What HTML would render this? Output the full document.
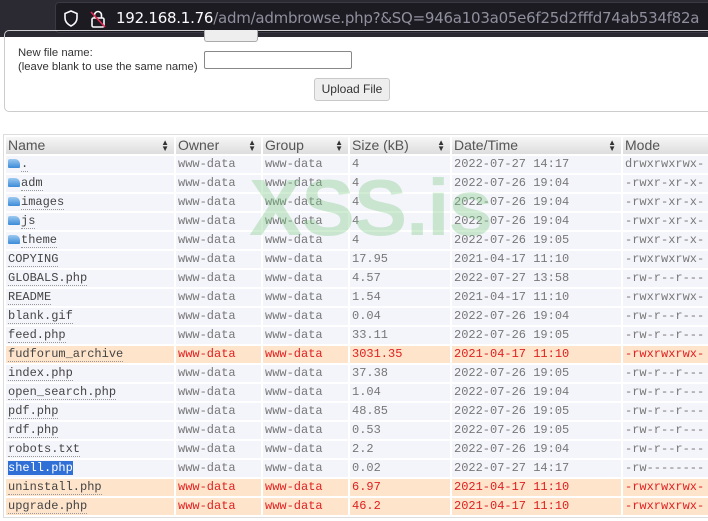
<!DOCTYPE html>
<html><head><meta charset="utf-8"><style>
*{margin:0;padding:0;box-sizing:border-box}
body{width:708px;height:521px;overflow:hidden;background:#fff;font-family:"Liberation Sans",sans-serif;position:relative}
.bar{position:absolute;left:0;top:0;width:708px;height:37px;background:#2b2a33}
.url{position:absolute;left:55px;top:2px;width:660px;height:31px;background:#1c1b22;border-radius:4px;border:1px solid #3a3944}
.url span{position:absolute;left:60px;top:6px;font-size:15px;color:#8f8f9d;white-space:nowrap;font-family:"DejaVu Sans",sans-serif;letter-spacing:-0.25px}
.url b{font-weight:normal;color:#fbfbfe}
.box{position:absolute;left:4px;top:30px;width:720px;height:82px;border:1px solid #ccc;border-radius:5px}
.lbl{position:absolute;left:18px;top:46px;font-size:11.3px;color:#333;line-height:14px}
.inp{position:absolute;left:204px;top:51px;width:148px;height:18px;border:1px solid #888;border-radius:2px}
.btn{position:absolute;left:314px;top:78px;width:76px;height:23px;border:1px solid #c8c8c8;border-radius:3px;background:#eee;font-size:12px;color:#333;text-align:center;line-height:21px}
.btn0{position:absolute;left:204px;top:30px;width:54px;height:12px;border:1px solid #aaa;border-top:none;border-radius:0 0 3px 3px;background:#eee}
table{position:absolute;left:3px;top:134px;border-collapse:separate;border-spacing:2px;border:1px solid #ddd;width:710px}
th{background:linear-gradient(#f6f6f6,#ddd);height:17px;font-weight:normal;font-size:14px;color:#555;text-align:left;padding:0 2px;position:relative;line-height:15px}
th i{position:absolute;right:5px;top:3px;font-style:normal;font-size:8px;color:#333;line-height:6px}
td{background:#f4f5fb;height:17px;font-family:"Liberation Mono",monospace;font-size:12px;color:#777;padding:0 2px;white-space:nowrap;line-height:15px}
td:first-child{color:#444}
td:first-child span{border-bottom:1px dotted #999}
tr.o td{background:#fde4cb;color:#e02020}
tr.o td:first-child{color:#444}
.sel{background:#2f6fd6;color:#fff!important;border:none!important}
.f{display:inline-block;width:12px;height:9px;background:linear-gradient(#9cc9f0,#3b8ad8);border-radius:2px 5px 1px 1px;margin-right:1px;vertical-align:-1px}
.wm{position:absolute;left:249px;top:162px;font-size:80px;font-weight:bold;color:rgba(120,200,130,.35);letter-spacing:-1px;pointer-events:none;font-family:"Liberation Sans",sans-serif}
</style></head><body>
<div class="bar"><div class="url">
<svg style="position:absolute;left:7px;top:7px" width="16" height="17" viewBox="0 0 16 17"><path d="M8 1L2 3.5v4.5c0 4 3 6.5 6 8 3-1.5 6-4 6-8V3.5z" fill="none" stroke="#fbfbfe" stroke-width="1.6"/></svg>
<svg style="position:absolute;left:34px;top:7px" width="16" height="18" viewBox="0 0 16 18"><rect x="2" y="8" width="12" height="9" rx="1.5" fill="none" stroke="#fbfbfe" stroke-width="1.6"/><path d="M4.5 8V5a3.5 3.5 0 0 1 7 0v3" fill="none" stroke="#fbfbfe" stroke-width="1.6"/><path d="M1 2l14 15" stroke="#e22850" stroke-width="1.6"/></svg>
<span><b>192.168.1.76</b>/adm/admbrowse.php?&amp;SQ=946a103a05e6f25d2fffd74ab534f82a</span></div></div>
<div class="box"></div>
<div class="btn0"></div>
<div class="lbl">New file name:<br>(leave blank to use the same name)</div>
<div class="inp"></div>
<div class="btn">Upload File</div>
<table>
<tr><th style="width:168px">Name<i>▲<br>▼</i></th><th style="width:85px">Owner<i>▲<br>▼</i></th><th style="width:85px">Group<i>▲<br>▼</i></th><th style="width:100px">Size (kB)<i>▲<br>▼</i></th><th style="width:169px">Date/Time<i>▲<br>▼</i></th><th>Mode</th></tr>
<tr><td><em class="f"></em><span>.</span></td><td>www-data</td><td>www-data</td><td>4</td><td>2022-07-27 14:17</td><td>drwxrwxrwx-</td></tr>
<tr><td><em class="f"></em><span>adm</span></td><td>www-data</td><td>www-data</td><td>4</td><td>2022-07-26 19:04</td><td>-rwxr-xr-x-</td></tr>
<tr><td><em class="f"></em><span>images</span></td><td>www-data</td><td>www-data</td><td>4</td><td>2022-07-26 19:04</td><td>-rwxr-xr-x-</td></tr>
<tr><td><em class="f"></em><span>js</span></td><td>www-data</td><td>www-data</td><td>4</td><td>2022-07-26 19:04</td><td>-rwxr-xr-x-</td></tr>
<tr><td><em class="f"></em><span>theme</span></td><td>www-data</td><td>www-data</td><td>4</td><td>2022-07-26 19:05</td><td>-rwxr-xr-x-</td></tr>
<tr><td><span>COPYING</span></td><td>www-data</td><td>www-data</td><td>17.95</td><td>2021-04-17 11:10</td><td>-rwxrwxrwx-</td></tr>
<tr><td><span>GLOBALS.php</span></td><td>www-data</td><td>www-data</td><td>4.57</td><td>2022-07-27 13:58</td><td>-rw-r--r---</td></tr>
<tr><td><span>README</span></td><td>www-data</td><td>www-data</td><td>1.54</td><td>2021-04-17 11:10</td><td>-rwxrwxrwx-</td></tr>
<tr><td><span>blank.gif</span></td><td>www-data</td><td>www-data</td><td>0.04</td><td>2022-07-26 19:04</td><td>-rw-r--r---</td></tr>
<tr><td><span>feed.php</span></td><td>www-data</td><td>www-data</td><td>33.11</td><td>2022-07-26 19:05</td><td>-rw-r--r---</td></tr>
<tr class="o"><td><span>fudforum_archive</span></td><td>www-data</td><td>www-data</td><td>3031.35</td><td>2021-04-17 11:10</td><td>-rwxrwxrwx-</td></tr>
<tr><td><span>index.php</span></td><td>www-data</td><td>www-data</td><td>37.38</td><td>2022-07-26 19:05</td><td>-rw-r--r---</td></tr>
<tr><td><span>open_search.php</span></td><td>www-data</td><td>www-data</td><td>1.04</td><td>2022-07-26 19:04</td><td>-rw-r--r---</td></tr>
<tr><td><span>pdf.php</span></td><td>www-data</td><td>www-data</td><td>48.85</td><td>2022-07-26 19:05</td><td>-rw-r--r---</td></tr>
<tr><td><span>rdf.php</span></td><td>www-data</td><td>www-data</td><td>0.53</td><td>2022-07-26 19:05</td><td>-rw-r--r---</td></tr>
<tr><td><span>robots.txt</span></td><td>www-data</td><td>www-data</td><td>2.2</td><td>2022-07-26 19:04</td><td>-rw-r--r---</td></tr>
<tr><td><span class="sel">shell.php</span></td><td>www-data</td><td>www-data</td><td>0.02</td><td>2022-07-27 14:17</td><td>-rw--------</td></tr>
<tr class="o"><td><span>uninstall.php</span></td><td>www-data</td><td>www-data</td><td>6.97</td><td>2021-04-17 11:10</td><td>-rwxrwxrwx-</td></tr>
<tr class="o"><td><span>upgrade.php</span></td><td>www-data</td><td>www-data</td><td>46.2</td><td>2021-04-17 11:10</td><td>-rwxrwxrwx-</td></tr>
</table>
<div class="wm">XSS.is</div>
</body></html>
